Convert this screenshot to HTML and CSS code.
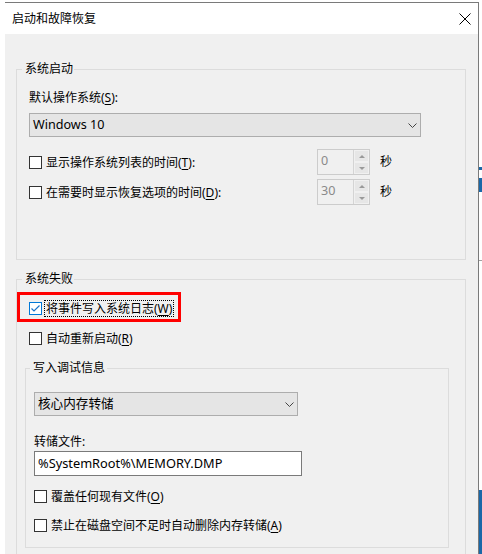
FILE: index.html
```html
<!DOCTYPE html>
<html lang="zh-CN">
<head>
<meta charset="utf-8">
<title>启动和故障恢复</title>
<link rel="stylesheet" href="styles.css">
</head>
<body>
<div class="screen">
  <div class="gutter"></div>
  <div class="window">
    <div class="titlebar">
      <span class="title">启动和故障恢复</span>
      <svg class="close" viewBox="0 0 12 12" width="12" height="12"><path d="M0.5 0.5 L11.5 11.5 M11.5 0.5 L0.5 11.5" stroke="#000" stroke-width="1" fill="none"/></svg>
    </div>
    <div class="body">
      <div class="group g1">
        <div class="gtitle">系统启动</div>
        <div class="field-label">默认操作系统(<u>S</u>):</div>
        <div class="select s1">
          <span class="sel-text">Windows 10</span>
          <svg class="chev" viewBox="0 0 9 5" width="9" height="5"><polyline points="0.5,0.5 4.5,4.5 8.5,0.5" stroke="#444" stroke-width="1" fill="none"/></svg>
        </div>
        <div class="timerow first">
          <div class="check-part">
            <div class="check"><span class="box"></span><span class="lbl">显示操作系统列表的时间(<u>T</u>):</span></div>
          </div>
          <div class="spin"><span class="val">0</span><div class="btns"><span class="btn"><i class="up"></i></span><span class="btn"><i class="dn"></i></span></div></div>
          <span class="unit">秒</span>
        </div>
        <div class="timerow second">
          <div class="check-part">
            <div class="check"><span class="box"></span><span class="lbl">在需要时显示恢复选项的时间(<u>D</u>):</span></div>
          </div>
          <div class="spin"><span class="val">30</span><div class="btns"><span class="btn"><i class="up"></i></span><span class="btn"><i class="dn"></i></span></div></div>
          <span class="unit">秒</span>
        </div>
      </div>
      <div class="group g2">
        <div class="gtitle">系统失败</div>
        <div class="highlight">
          <div class="check"><span class="box checked"><svg viewBox="0 0 11 11" width="11" height="11"><polyline points="1.5,5.5 4,8 9.5,2.5" stroke="#1a73c8" stroke-width="1.2" fill="none"/></svg></span><span class="lbl focus">将事件写入系统日志(<u>W</u>)</span></div>
        </div>
        <div class="check restart"><span class="box"></span><span class="lbl">自动重新启动(<u>R</u>)</span></div>
        <div class="group g3">
          <div class="gtitle t3">写入调试信息</div>
          <div class="select s2">
            <span class="sel-text">核心内存转储</span>
            <svg class="chev" viewBox="0 0 9 5" width="9" height="5"><polyline points="0.5,0.5 4.5,4.5 8.5,0.5" stroke="#444" stroke-width="1" fill="none"/></svg>
          </div>
          <div class="field-label dump">转储文件:</div>
          <div class="input">%SystemRoot%\MEMORY.DMP</div>
          <div class="check overwrite"><span class="box"></span><span class="lbl">覆盖任何现有文件(<u>O</u>)</span></div>
          <div class="check nodelete"><span class="box"></span><span class="lbl">禁止在磁盘空间不足时自动删除内存转储(<u>A</u>)</span></div>
        </div>
      </div>
    </div>
  </div>
  <div class="edge">
    <span class="e-white e1"></span>
    <span class="e-blue e2"></span>
    <span class="e-white e3"></span>
    <span class="e-blue e4"></span>
    <span class="e-white e5"></span>
    <span class="e-gray e6"></span>
    <span class="e-white e7"></span>
    <span class="e-blue e8"></span>
  </div>
</div>
</body>
</html>
```
FILE: styles.css
```css
* { box-sizing: border-box; }
html, body { margin: 0; padding: 0; }
body {
  background: #fff;
  font-family: "Noto Sans", "Noto Sans CJK SC", sans-serif;
  font-size: 12px;
  color: #000;
}
u { text-underline-offset: 2px; }

.screen {
  display: flex;
  width: 482px;
  height: 554px;
  overflow: hidden;
}
.gutter { width: 5px; flex: none; }

.window {
  width: 474px;
  height: 552px;
  flex: none;
  margin-top: 2px;
  border-top: 1px solid #7a7a7a;
  border-right: 1px solid #7a7a7a;
  background: #f0f0f0;
  display: flex;
  flex-direction: column;
  overflow: hidden;
}
.titlebar {
  height: 31px;
  flex: none;
  background: #fff;
  display: flex;
  align-items: center;
  padding-left: 7px;
}
.title { line-height: 16px; }
.close { margin-left: auto; margin-right: 7px; display: block; }

.body {
  flex: 1;
  padding: 35px 0 0 11px;
  overflow: hidden;
}

.group {
  border: 1px solid #dcdcdc;
  display: flex;
  flex-direction: column;
  align-items: flex-start;
}
.gtitle {
  margin: -8px 0 0 -7px;
  padding: 0 1px 0 3px;
  line-height: 14px;
  background: #f0f0f0;
}
.g1 {
  width: 450px;
  padding: 0 0 54px 12px;
}
.g2 {
  width: 450px;
  margin-top: 19px;
  padding: 0 0 30px 12px;
}
.g3 {
  width: 424px;
  margin: 20px 0 0 -4px;
  padding: 0 0 12px 8px;
}
.t3 { margin-left: -4px; padding: 0 2px 0 3px; }

.field-label {
  line-height: 16px;
  margin-top: 14px;
}
.field-label.dump { margin-top: 18px; }

.select {
  height: 24px;
  border: 1px solid #adadad;
  background: #e5e5e5;
  display: flex;
  align-items: center;
  padding: 0 3px;
}
.s1 { width: 392px; margin-top: 7px; }
.s2 { width: 264px; margin-top: 17px; }
.sel-text { font-size: 12.6px; line-height: 16px; }
.chev { margin-left: auto; display: block; }

.input {
  width: 268px;
  height: 25px;
  margin-top: 1px;
  border: 1px solid #7a7a7a;
  background: #fff;
  padding: 0 3px;
  font-size: 12.8px;
  line-height: 23px;
}

.timerow {
  display: flex;
  align-items: center;
  height: 26px;
}
.timerow.first { margin-top: 12px; }
.timerow.second { margin-top: 4px; }
.check-part { width: 288px; }

.check {
  display: flex;
  align-items: center;
  height: 19px;
}
.box {
  width: 13px;
  height: 13px;
  flex: none;
  border: 1px solid #333;
  background: #fff;
  margin-right: 2px;
  display: flex;
  align-items: center;
  justify-content: center;
}
.box.checked { border-color: #0078d7; }
.box svg { display: block; }
.lbl {
  border: 1px solid transparent;
  padding: 0 1px;
  line-height: 15px;
  white-space: nowrap;
}
.lbl.focus { border: 1px dotted #000; }

.spin {
  width: 53px;
  height: 26px;
  border: 1px solid #cccccc;
  background: #f0f0f0;
  display: flex;
}
.val {
  flex: 1;
  padding-left: 3px;
  color: #8a8a8a;
  font-size: 12.6px;
  line-height: 22px;
  border-right: 1px solid #d4d4d4;
}
.btns {
  width: 15px;
  display: flex;
  flex-direction: column;
}
.btn {
  flex: 1;
  background: #e6e6e6;
  border: 1px solid #f0f0f0;
  display: flex;
  align-items: center;
  justify-content: center;
}
.up, .dn {
  display: block;
  width: 0;
  height: 0;
  border-left: 3px solid transparent;
  border-right: 3px solid transparent;
}
.up { border-bottom: 3px solid #999; }
.dn { border-top: 3px solid #999; }
.unit { margin-left: 10px; line-height: 16px; }

.highlight {
  margin: 6px 0 0 -12px;
  border: 3px solid #f00;
  padding: 4px 4px 1px 9px;
}
.restart { margin-top: 7px; }
.overwrite { margin-top: 11px; }
.nodelete { margin-top: 10px; }

.edge {
  width: 3px;
  flex: none;
  display: flex;
  flex-direction: column;
}
.edge span { display: block; flex: none; }
.e-white { background: #fff; }
.e-blue { background: #1a68a8; }
.e-gray { background: #a0a0a0; }
.e1 { height: 167px; }
.e2 { height: 3px; }
.e3 { height: 8px; }
.e4 { height: 14px; }
.e5 { height: 68px; }
.e6 { height: 1px; }
.e7 { height: 229px; }
.e8 { flex: 1 !important; }
```
